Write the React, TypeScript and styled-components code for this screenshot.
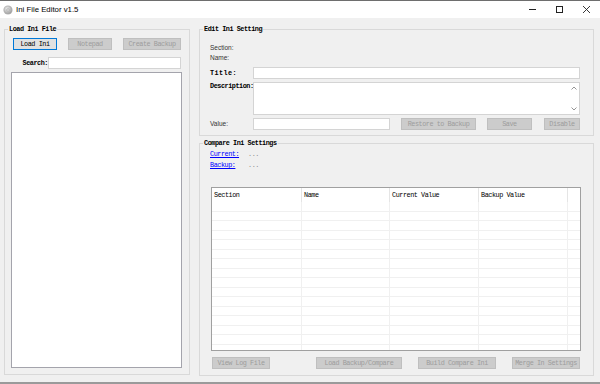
import React from "react";
import styled, { createGlobalStyle } from "styled-components";

const mono = `"Liberation Mono", "DejaVu Sans Mono", monospace`;
const sans = `"Liberation Sans", Arial, sans-serif`;

// SimSun-like look: slightly larger mono glyphs, tightened to the same advance
const monoSize = `font-size: 6.8px; letter-spacing: -0.45px;`;

const GlobalStyle = createGlobalStyle`
  html, body {
    margin: 0;
    padding: 0;
    background: #f0f0f0;
  }
  * {
    box-sizing: border-box;
  }
`;

const Window = styled.div`
  width: 600px;
  height: 384px;
  display: flex;
  flex-direction: column;
  background: #f0f0f0;
  border-top: 1px solid #6e6e6e;
  border-bottom: 2px solid #9a9a9a;
  overflow: hidden;
`;

const TitleBar = styled.div`
  height: 17px;
  flex: none;
  display: flex;
  align-items: center;
  background: #ffffff;
`;

const AppIcon = styled.svg`
  width: 10px;
  height: 10px;
  margin-left: 3px;
`;

const TitleText = styled.span`
  margin-left: 3px;
  font-family: ${sans};
  font-size: 7.8px;
  color: #000;
  flex: 1;
`;

const Controls = styled.div`
  display: flex;
  height: 100%;
`;

const ControlCell = styled.div`
  width: 27px;
  display: flex;
  align-items: center;
  justify-content: center;
`;

const Body = styled.div`
  flex: 1;
  display: flex;
  gap: 9px;
  padding: 8px 0 0 4px;
`;

const GroupBox = styled.fieldset<{ $w: number; $h: number }>`
  margin: 0;
  padding: 0;
  min-width: 0;
  width: ${(p) => p.$w}px;
  height: ${(p) => p.$h}px;
  border: 1px solid #d9d9d9;
  display: flex;
  flex-direction: column;
`;

const Legend = styled.legend`
  margin-left: 3px;
  padding: 0 1px;
  font-family: ${mono};
  font-weight: bold;
  ${monoSize}
  line-height: 7px;
  color: #000;
`;

const Content = styled.div<{ $pt: number; $pl: number; $pr?: number }>`
  display: flex;
  flex-direction: column;
  padding: ${(p) => p.$pt}px ${(p) => p.$pr ?? 0}px 0 ${(p) => p.$pl}px;
`;

const Row = styled.div<{ $h: number; $mt?: number; $ml?: number }>`
  display: flex;
  align-items: center;
  height: ${(p) => p.$h}px;
  margin-top: ${(p) => p.$mt ?? 0}px;
  margin-left: ${(p) => p.$ml ?? 0}px;
  flex: none;
`;

const Button = styled.button<{ $w: number; $ml?: number; $default?: boolean }>`
  width: ${(p) => p.$w}px;
  height: 12px;
  margin: 0 0 0 ${(p) => p.$ml ?? 0}px;
  padding: 0;
  font-family: ${mono};
  ${monoSize}
  line-height: 10px;
  color: #000;
  background: #e1e1e1;
  border: 1px solid ${(p) => (p.$default ? "#0078d7" : "#adadad")};
  white-space: nowrap;
  &:disabled {
    background: #cccccc;
    border-color: #bfbfbf;
    color: #9c9c9c;
  }
`;

const Label = styled.span<{ $w?: number; $mono?: boolean; $right?: boolean; $top?: boolean }>`
  width: ${(p) => (p.$w ? `${p.$w}px` : "auto")};
  flex: none;
  align-self: ${(p) => (p.$top ? "flex-start" : "center")};
  text-align: ${(p) => (p.$right ? "right" : "left")};
  font-family: ${(p) => (p.$mono ? mono : sans)};
  font-weight: ${(p) => (p.$mono ? "bold" : "normal")};
  ${(p) => (p.$mono ? monoSize : "font-size: 6.5px;")}
  line-height: 8px;
  color: ${(p) => (p.$mono ? "#000" : "#333")};
  white-space: nowrap;
`;

const TextBox = styled.div<{ $w: number; $h?: number }>`
  width: ${(p) => p.$w}px;
  height: ${(p) => p.$h ?? 12}px;
  flex: none;
  background: #ffffff;
  border: 1px solid #d4d4d4;
`;

const MultiLine = styled.div`
  width: 327px;
  height: 33px;
  display: flex;
  justify-content: flex-end;
  background: #ffffff;
  border: 1px solid #d4d4d4;
`;

const ScrollGutter = styled.div`
  width: 11px;
  display: flex;
  flex-direction: column;
  justify-content: space-between;
  align-items: center;
  padding: 3px 0 3px;
`;

const ListBox = styled.div`
  width: 171px;
  height: 296px;
  margin-top: 3px;
  background: #ffffff;
  border: 1px solid #a4a4ac;
`;

const RightColumn = styled.div`
  display: flex;
  flex-direction: column;
  gap: 4px;
`;

const Link = styled.a`
  width: 38px;
  font-family: ${mono};
  ${monoSize}
  line-height: 8px;
  color: #0000ff;
  text-decoration: underline;
`;

const Dots = styled.span`
  font-family: ${mono};
  ${monoSize}
  line-height: 8px;
  color: #8a8a8a;
`;

const Table = styled.div`
  width: 370px;
  height: 164px;
  margin: 18px 0 0 1px;
  display: flex;
  flex-direction: column;
  background: #ffffff;
  border: 1px solid #a0a0a0;
`;

const HeaderRow = styled.div`
  height: 14px;
  display: flex;
  flex: none;
`;

const HeaderCell = styled.div<{ $w: number }>`
  width: ${(p) => p.$w}px;
  flex: none;
  padding-left: 2px;
  border-right: 1px solid #e5e5e5;
  font-family: ${mono};
  ${monoSize}
  line-height: 14px;
  color: #000;
  white-space: nowrap;
`;

const GridBody = styled.div`
  flex: 1;
  display: flex;
  background-image: repeating-linear-gradient(
    to bottom,
    transparent 0,
    transparent 9px,
    #f0f0f0 9px,
    #f0f0f0 10px,
    transparent 10px,
    transparent 18px,
    #f0f0f0 18px,
    #f0f0f0 19px
  );
`;

const GridColumn = styled.div<{ $w: number }>`
  width: ${(p) => p.$w}px;
  flex: none;
  border-right: 1px solid #f0f0f0;
`;

const columns = [
  { name: "Section", width: 90 },
  { name: "Name", width: 88 },
  { name: "Current Value", width: 89 },
  { name: "Backup Value", width: 89 },
];

const Chevron: React.FC<{ up?: boolean }> = ({ up }) => (
  <svg width="6" height="4" viewBox="0 0 6 4">
    <path
      d={up ? "M0.5 3.5 L3 1 L5.5 3.5" : "M0.5 0.5 L3 3 L5.5 0.5"}
      fill="none"
      stroke="#8a8a8a"
      strokeWidth="0.9"
    />
  </svg>
);

const App: React.FC = () => {
  return (
    <>
      <GlobalStyle />
      <Window>
        <TitleBar>
          <AppIcon viewBox="0 0 10 10">
            <defs>
              <radialGradient id="ig" cx="40%" cy="35%" r="70%">
                <stop offset="0" stopColor="#f2f2f2" />
                <stop offset="1" stopColor="#9a9a9a" />
              </radialGradient>
            </defs>
            <circle cx="5" cy="5" r="4.6" fill="#b5b5b5" />
            <circle cx="5" cy="5" r="3.8" fill="url(#ig)" />
            <circle cx="5" cy="5" r="1.4" fill="#d8d8d8" stroke="#9c9c9c" strokeWidth="0.5" />
          </AppIcon>
          <TitleText>Ini File Editor v1.5</TitleText>
          <Controls>
            <ControlCell>
              <svg width="9" height="9" viewBox="0 0 9 9">
                <line x1="1" y1="4.5" x2="8" y2="4.5" stroke="#222" strokeWidth="1" />
              </svg>
            </ControlCell>
            <ControlCell>
              <svg width="9" height="9" viewBox="0 0 9 9">
                <rect x="1.5" y="1.5" width="6" height="6" fill="none" stroke="#222" strokeWidth="1" />
              </svg>
            </ControlCell>
            <ControlCell>
              <svg width="9" height="9" viewBox="0 0 9 9">
                <path d="M1 1 L8 8 M8 1 L1 8" stroke="#222" strokeWidth="0.9" />
              </svg>
            </ControlCell>
          </Controls>
        </TitleBar>

        <Body>
          <GroupBox $w={186} $h={349}>
            <Legend>Load Ini File</Legend>
            <Content $pt={5} $pl={6}>
              <Row $h={12} $ml={2}>
                <Button $w={44} $default>Load Ini</Button>
                <Button $w={44} $ml={11} disabled>
                  Notepad
                </Button>
                <Button $w={58} $ml={11} disabled>
                  Create Backup
                </Button>
              </Row>
              <Row $h={12} $mt={7}>
                <Label $w={37} $mono $right>
                  Search:
                </Label>
                <TextBox $w={133} />
              </Row>
              <ListBox />
            </Content>
          </GroupBox>

          <RightColumn>
            <GroupBox $w={395} $h={110}>
              <Legend>Edit Ini Setting</Legend>
              <Content $pt={10} $pl={10} $pr={13}>
                <Row $h={10}>
                  <Label>Section:</Label>
                </Row>
                <Row $h={10}>
                  <Label>Name:</Label>
                </Row>
                <Row $h={12} $mt={4}>
                  <Label $w={43} $mono style={{ letterSpacing: "0.4px" }}>
                    Title:
                  </Label>
                  <TextBox $w={327} />
                </Row>
                <Row $h={33} $mt={3}>
                  <Label $w={43} $mono $top>
                    Description:
                  </Label>
                  <MultiLine>
                    <ScrollGutter>
                      <Chevron up />
                      <Chevron />
                    </ScrollGutter>
                  </MultiLine>
                </Row>
                <Row $h={12} $mt={3}>
                  <Label $w={43}>Value:</Label>
                  <TextBox $w={137} />
                  <Button $w={75} $ml={11} disabled>
                    Restore to Backup
                  </Button>
                  <Button $w={45} $ml={11} disabled>
                    Save
                  </Button>
                  <Button $w={36} $ml={12} disabled>
                    Disable
                  </Button>
                </Row>
              </Content>
            </GroupBox>

            <GroupBox $w={395} $h={236}>
              <Legend>Compare Ini Settings</Legend>
              <Content $pt={3} $pl={10} $pr={13}>
                <Row $h={8}>
                  <Link>Current:</Link>
                  <Dots>...</Dots>
                </Row>
                <Row $h={8} $mt={3}>
                  <Link>Backup:</Link>
                  <Dots>...</Dots>
                </Row>
                <Table>
                  <HeaderRow>
                    {columns.map((c) => (
                      <HeaderCell key={c.name} $w={c.width}>
                        {c.name}
                      </HeaderCell>
                    ))}
                  </HeaderRow>
                  <GridBody>
                    {columns.map((c) => (
                      <GridColumn key={c.name} $w={c.width} />
                    ))}
                  </GridBody>
                </Table>
                <Row $h={12} $mt={6} $ml={2}>
                  <Button $w={58} disabled>
                    View Log File
                  </Button>
                  <Button $w={86} $ml={46} disabled>
                    Load Backup/Compare
                  </Button>
                  <Button $w={78} $ml={16} disabled>
                    Build Compare Ini
                  </Button>
                  <Button $w={68} $ml={16} disabled>
                    Merge In Settings
                  </Button>
                </Row>
              </Content>
            </GroupBox>
          </RightColumn>
        </Body>
      </Window>
    </>
  );
};

export default App;
